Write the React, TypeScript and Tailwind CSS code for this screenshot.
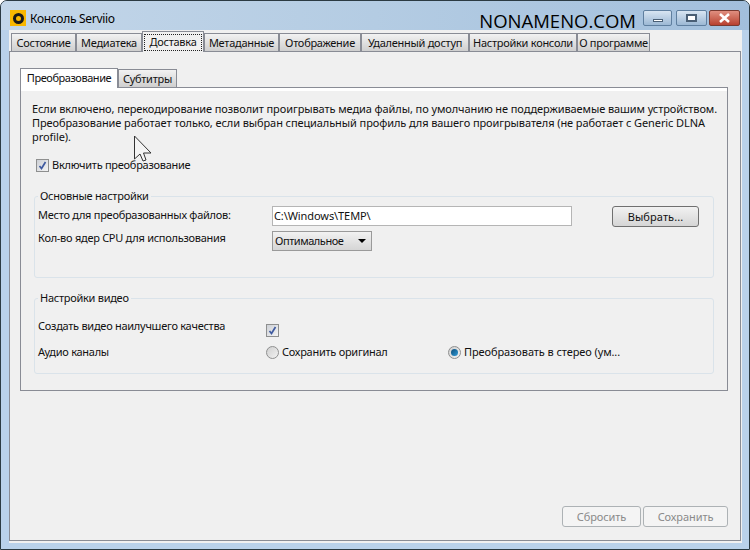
import React from 'react'

const font = { fontFamily: '"Noto Sans", "Liberation Sans", sans-serif' }

const mainTabs = [
  { label: 'Состояние', w: 'w-[65px]' },
  { label: 'Медиатека', w: 'w-[66px]' },
  { label: 'Доставка', w: 'w-[62px]', active: true },
  { label: 'Метаданные', w: 'w-[75px]' },
  { label: 'Отображение', w: 'w-[82px]' },
  { label: 'Удаленный доступ', w: 'w-[108px]' },
  { label: 'Настройки консоли', w: 'w-[108px]' },
  { label: 'О программе', w: 'w-[73px]' },
]

function CheckBox({ className = '' }: { className?: string }) {
  return (
    <span className={`flex h-[13px] w-[13px] shrink-0 items-center justify-center border border-[#8e8f8f] bg-gradient-to-br from-[#cdd0d6] to-[#f4f4f4] ${className}`}>
      <svg width="9" height="9" viewBox="0 0 9 9">
        <path d="M1.5 5 L3.5 7.5 L7.5 1" fill="none" stroke="#3f5aa0" strokeWidth="1.7" />
      </svg>
    </span>
  )
}

function Radio({ checked }: { checked?: boolean }) {
  return (
    <span className="flex h-[13px] w-[13px] shrink-0 items-center justify-center rounded-full border border-[#8e8f8f] bg-gradient-to-br from-[#cfcfcf] to-[#f2f2f2]">
      {checked && <span className="h-[7px] w-[7px] rounded-full bg-gradient-to-br from-[#0d4d7a] to-[#2f9bd8]" />}
    </span>
  )
}

function Group({ title, className, children }: { title: string; className: string; children: React.ReactNode }) {
  return (
    <fieldset className={`rounded-[3px] border border-[#dae3ea] pl-[3px] ${className}`}>
      <legend className="px-[2px] pb-[2px] leading-[11px]">{title}</legend>
      {children}
    </fieldset>
  )
}

export default function App() {
  return (
    <div
      className="relative flex h-[550px] w-[750px] flex-col overflow-hidden rounded-t-[7px] border border-[#2b3a42] bg-[#b9d1ea] text-[11px] leading-[14px] tracking-[-0.27px] text-[#111]"
      style={font}
    >
      {/* Title bar */}
      <div className="flex h-[29px] shrink-0 items-start bg-gradient-to-r from-[#c3d6e9] via-[#b4cce3] to-[#a2bfdc] pl-[9px] pt-[9px]">
        <span className="flex h-[16px] w-[16px] items-center justify-center bg-[#f9b700]">
          <span className="h-[11px] w-[11px] rounded-full border-[3px] border-[#1a1a1a]" />
        </span>
        <span className="ml-[4px] mt-[1px] text-[12px] leading-[16px] tracking-[-0.3px] text-black">Консоль Serviio</span>
        <span className="ml-auto mr-[7px] text-[18.5px] leading-[22px] tracking-normal text-black" style={{ fontFamily: '"Open Sans", sans-serif' }}>
          NONAMENO.COM
        </span>
        <div className="mr-[9px] flex gap-[2px]">
          <div className="mr-[2px] flex h-[16px] w-[29px] items-end justify-center rounded-[2px] border border-[#5f7f9f] bg-gradient-to-b from-[#d8e5f2] to-[#9cb8d4] pb-[3px]">
            <span className="h-[3px] w-[10px] border border-[#4a5f75] bg-white" />
          </div>
          <div className="flex h-[16px] w-[31px] items-center justify-center rounded-[2px] border border-[#5f7f9f] bg-gradient-to-b from-[#d8e5f2] to-[#9cb8d4]">
            <span className="h-[8px] w-[11px] border-2 border-[#4a5f75] bg-white" />
          </div>
          <div className="flex h-[16px] w-[31px] items-center justify-center rounded-[2px] border border-[#7a3a30] bg-gradient-to-b from-[#e08f80] to-[#b8402f]">
            <svg width="13" height="10" viewBox="0 0 13 10">
              <path d="M2 1 L11 9 M11 1 L2 9" stroke="#fff" strokeWidth="2.6" />
            </svg>
          </div>
        </div>
      </div>

      {/* Client area */}
      <div className="mb-[6px] ml-[8px] mr-[7px] flex min-h-0 flex-1 flex-col bg-[#f0f0f0]">
        <div className="flex h-[21px] shrink-0 items-end pl-[2px]">
          {mainTabs.map((t) =>
            t.active ? (
              <div
                key={t.label}
                className={`relative z-10 -mb-[1px] flex h-[21px] ${t.w} flex-col border border-b-0 border-[#898c95] bg-[#f0f0f0] px-[1px] pt-[2px]`}
              >
                <span className="flex h-[17px] items-start justify-center whitespace-nowrap border border-dotted border-[#222] leading-[14px]">
                  {t.label}
                </span>
              </div>
            ) : (
              <div
                key={t.label}
                className={`flex h-[18px] ${t.w} items-center justify-center whitespace-nowrap border border-b-0 border-[#898c95] bg-gradient-to-b from-[#f2f2f2] to-[#cfcfcf] pt-[1px]`}
              >
                {t.label}
              </div>
            ),
          )}
        </div>

        <div className="mb-[2px] mr-[1px] flex min-h-0 flex-1 flex-col border border-[#898c95] pb-[13px] pl-[10px] pr-[12px] pt-[14px]">
          {/* Inner tabs */}
          <div className="flex h-[21px] shrink-0 items-end">
            <div className="relative z-10 -mb-[1px] flex h-[20px] w-[98px] items-center justify-center border border-b-0 border-[#898c95] bg-white pb-[2px] tracking-[-0.45px]">
              Преобразование
            </div>
            <div className="flex h-[18px] w-[59px] items-center justify-center border border-b-0 border-[#898c95] bg-gradient-to-b from-[#f2f2f2] to-[#cfcfcf] pt-[1px]">
              Субтитры
            </div>
          </div>

          <div className="flex h-[304px] shrink-0 flex-col border border-[#898c95] pl-[11px] pr-[13px] pt-[14px] shadow-[inset_0_3px_0_#fff]">
            <p className="whitespace-nowrap tracking-[-0.09px]">
              Если включено, перекодирование позволит проигрывать медиа файлы, по умолчанию не поддерживаемые вашим устройством.
              <br />
              Преобразование работает только, если выбран специальный профиль для вашего проигрывателя (не работает с Generic DLNA
              <br />
              profile).
            </p>
            <label className="ml-[4px] mt-[14px] flex items-center gap-[3px]">
              <CheckBox />
              Включить преобразование
            </label>

            <Group title="Основные настройки" className="ml-[2px] mt-[18px] h-[88px] shrink-0">
              <div className="grid grid-cols-[234px_300px_40px_87px] items-start pt-[3px]">
                <span className="pt-[2px]">Место для преобразованных файлов:</span>
                <span className="flex h-[20px] items-center border border-[#b5b5b5] bg-white pl-[1px] tracking-[-0.09px]">C:\Windows\TEMP\</span>
                <span />
                <button className="h-[21px] rounded-[3px] border border-[#707070] bg-gradient-to-b from-[#f2f2f2] to-[#d5d5d5] text-[11px] tracking-[0.1px]">
                  Выбрать...
                </button>
              </div>
              <div className="mt-[4px] grid grid-cols-[234px_100px] items-start">
                <span>Кол-во ядер CPU для использования</span>
                <div className="flex h-[20px] items-center justify-between border border-[#9a9a9a] bg-gradient-to-b from-[#f2f2f2] to-[#d5d5d5] pl-[2px] pr-[5px] tracking-[-0.45px]">
                  Оптимальное
                  <span className="h-0 w-0 border-x-[4px] border-t-[4px] border-x-transparent border-t-black" />
                </div>
              </div>
            </Group>

            <Group title="Настройки видео" className="ml-[2px] mt-[14px] h-[82px] shrink-0">
              <div className="grid grid-cols-[228px_1fr] items-start pt-[14px]">
                <span>Создать видео наилучшего качества</span>
                <CheckBox className="mt-[5px]" />
              </div>
              <div className="mt-[8px] grid grid-cols-[228px_182px_1fr] items-center">
                <span>Аудио каналы</span>
                <span className="flex items-center gap-[3px]">
                  <Radio />
                  Сохранить оригинал
                </span>
                <span className="flex items-center gap-[3px] tracking-[-0.09px]">
                  <Radio checked />
                  Преобразовать в стерео (ум...
                </span>
              </div>
            </Group>
          </div>

          <div className="mt-auto flex justify-end gap-[2px]">
            <button className="h-[21px] w-[79px] rounded-[3px] border border-[#adb2b5] bg-[#f4f4f4] text-[11px] tracking-[-0.09px] text-[#8a8a8a]">Сбросить</button>
            <button className="h-[21px] w-[85px] rounded-[3px] border border-[#adb2b5] bg-[#f4f4f4] text-[11px] tracking-[-0.09px] text-[#8a8a8a]">Сохранить</button>
          </div>
        </div>
      </div>

      {/* Mouse cursor in the screenshot */}
      <svg className="absolute left-[132px] top-[134px]" width="20" height="28" viewBox="0 0 20 28">
        <path d="M1.5 1 L1.5 24 L7 19 L10 26 L13 25 L10.5 18 L18 18 Z" fill="#f4f4f4" stroke="#333" strokeWidth="1" />
      </svg>
    </div>
  )
}
